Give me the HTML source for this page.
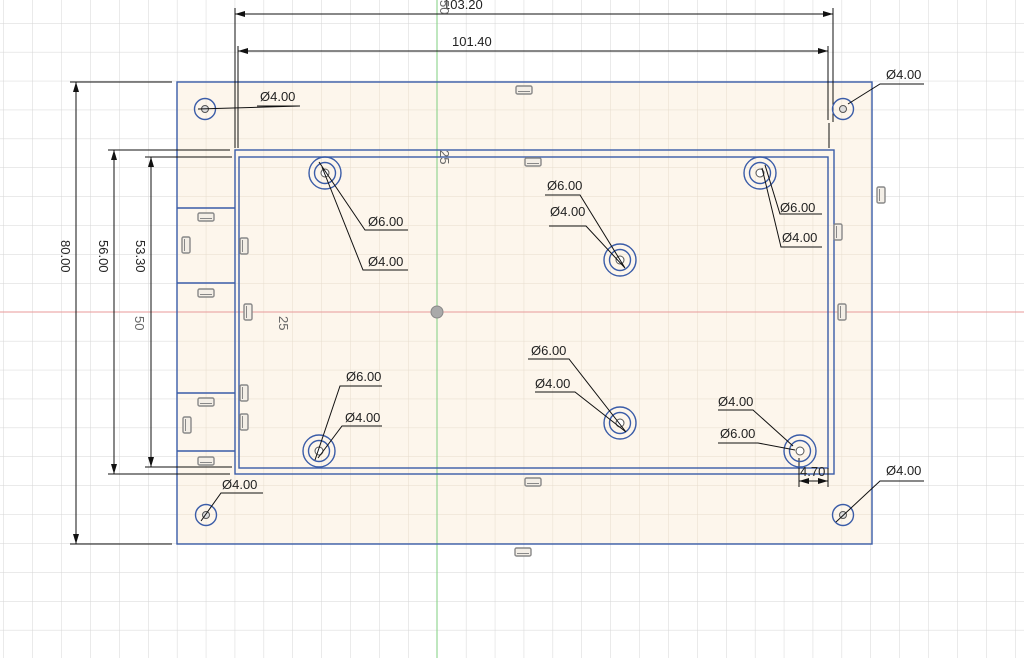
<!DOCTYPE html><html><head><style>
html,body{margin:0;padding:0;background:#fff;overflow:hidden}
svg{display:block}
text{font-family:"Liberation Sans",sans-serif;font-size:13px;fill:#222}
</style></head><body>
<svg width="1024" height="658" viewBox="0 0 1024 658" xmlns="http://www.w3.org/2000/svg">
<defs>
<pattern id="g" x="437" y="312" width="28.9" height="28.9" patternUnits="userSpaceOnUse">
<path d="M0 0H28.9M0 0V28.9" stroke="#d6d6d6" stroke-width="1" fill="none"/>
</pattern>
<pattern id="g2" x="437" y="312" width="28.9" height="28.9" patternUnits="userSpaceOnUse">
<path d="M0 0H28.9M0 0V28.9" stroke="#e6dccd" stroke-width="1" fill="none"/>
</pattern>
<marker id="a" viewBox="0 0 10 6" refX="10" refY="3" markerWidth="10" markerHeight="6" orient="auto-start-reverse" markerUnits="userSpaceOnUse"><path d="M0 0L10 3L0 6z" fill="#111"/></marker>
<g id="bt"><rect x="-8" y="-4" width="16" height="8" rx="1.5" fill="#f3eee6" stroke="#888" stroke-width="1.4"/><path d="M-6 1.5h12" stroke="#888"/></g>
<g id="dh"><circle r="16" fill="none" stroke="#3a5ca8" stroke-width="1.4"/><circle r="10.5" fill="none" stroke="#3a5ca8" stroke-width="1.4"/><circle r="4" fill="#fff" stroke="#555"/></g>
<g id="sh"><circle r="10.5" fill="none" stroke="#3a5ca8" stroke-width="1.4"/><circle r="3.5" fill="#ddd" stroke="#555"/></g>
</defs>
<rect width="1024" height="658" fill="url(#g)"/>
<rect x="177" y="82" width="695" height="462" fill="#fdf6ec"/>
<rect x="177" y="82" width="695" height="462" fill="url(#g2)"/>
<line x1="437" y1="0" x2="437" y2="658" stroke="#7fcf7f"/>
<line x1="0" y1="312" x2="1024" y2="312" stroke="#e89a9a"/>
<g fill="none" stroke="#3a5ca8" stroke-width="1.4">
<rect x="177" y="82" width="695" height="462"/>
<rect x="235" y="150" width="599" height="324"/>
<rect x="239" y="157" width="589" height="311"/>
<path d="M177 208H235M177 283H235M177 393H235M177 451H235"/>
</g>
<g stroke="#111" stroke-width="1" fill="none">
<path d="M235 8V148M833 8V122M238 46V148M828 46V120M829 123V148"/>
<path d="M235 14H833" marker-start="url(#a)" marker-end="url(#a)"/>
<path d="M238 51H828" marker-start="url(#a)" marker-end="url(#a)"/>
<path d="M70 82H172M70 544H172M108 150H230M108 474H230M145 157H232M145 467H232"/>
<path d="M76 82V544" marker-start="url(#a)" marker-end="url(#a)"/>
<path d="M114 150V474" marker-start="url(#a)" marker-end="url(#a)"/>
<path d="M151 157V467" marker-start="url(#a)" marker-end="url(#a)"/>
<path d="M799 458V487M828 468V487"/>
<path d="M799 481H828" marker-start="url(#a)" marker-end="url(#a)"/>
</g>
<text x="443" y="9">103.20</text>
<text x="452" y="46">101.40</text>
<text x="800" y="476">4.70</text>
<text transform="translate(61,240) rotate(90)">80.00</text>
<text transform="translate(99,240) rotate(90)">56.00</text>
<text transform="translate(136,240) rotate(90)">53.30</text>
<text transform="translate(135,316) rotate(90)" style="fill:#666">50</text>
<text transform="translate(279,316) rotate(90)" style="fill:#666">25</text>
<text transform="translate(440,150) rotate(90)" style="fill:#666">25</text>
<text transform="translate(440,0) rotate(90)" style="fill:#666">50</text>
<circle cx="437" cy="312" r="6" fill="#aaa" stroke="#888"/>
<use href="#sh" x="205" y="109"/><use href="#sh" x="843" y="109"/>
<use href="#sh" x="206" y="515"/><use href="#sh" x="843" y="515"/>
<use href="#dh" x="325" y="173"/><use href="#dh" x="760" y="173"/>
<use href="#dh" x="620" y="260"/><use href="#dh" x="319" y="451"/>
<use href="#dh" x="620" y="423"/><use href="#dh" x="800" y="451"/>
<g stroke="#111" stroke-width="1" fill="none">
<path d="M198 109L300 106"/><path d="M257 106H300"/>
<path d="M848 104L880 84H924"/>
<path d="M201 521L221 493H263"/>
<path d="M836 522L880 481H924"/>
<path d="M319 162L365 230H408M322 167L363 270H408"/>
<path d="M765 165L780 214H822M762 168L781 247H822"/>
<path d="M625 268L580 195H545M625 268L586 226H549"/>
<path d="M315 460L340 386H382M318 458L342 426H382"/>
<path d="M626 432L569 359H528M626 432L575 392H535"/>
<path d="M793 446L753 410H718M795 450L758 443H718"/>
</g>
<text x="260" y="101">Ø4.00</text>
<text x="886" y="79">Ø4.00</text>
<text x="222" y="489">Ø4.00</text>
<text x="886" y="475">Ø4.00</text>
<text x="368" y="226">Ø6.00</text>
<text x="368" y="266">Ø4.00</text>
<text x="780" y="212">Ø6.00</text>
<text x="782" y="242">Ø4.00</text>
<text x="547" y="190">Ø6.00</text>
<text x="550" y="216">Ø4.00</text>
<text x="346" y="381">Ø6.00</text>
<text x="345" y="422">Ø4.00</text>
<text x="531" y="355">Ø6.00</text>
<text x="535" y="388">Ø4.00</text>
<text x="718" y="406">Ø4.00</text>
<text x="720" y="438">Ø6.00</text>
<use href="#bt" x="524" y="90"/><use href="#bt" x="533" y="162"/><use href="#bt" x="533" y="482"/><use href="#bt" x="523" y="552"/>
<use href="#bt" x="206" y="217"/><use href="#bt" x="206" y="293"/><use href="#bt" x="206" y="402"/><use href="#bt" x="206" y="461"/>
<g transform="rotate(90)"><use href="#bt" x="245" y="-186"/><use href="#bt" x="246" y="-244"/><use href="#bt" x="312" y="-248"/><use href="#bt" x="393" y="-244"/><use href="#bt" x="422" y="-244"/><use href="#bt" x="425" y="-187"/><use href="#bt" x="195" y="-881"/><use href="#bt" x="232" y="-838"/><use href="#bt" x="312" y="-842"/></g>
</svg>
</body></html>
